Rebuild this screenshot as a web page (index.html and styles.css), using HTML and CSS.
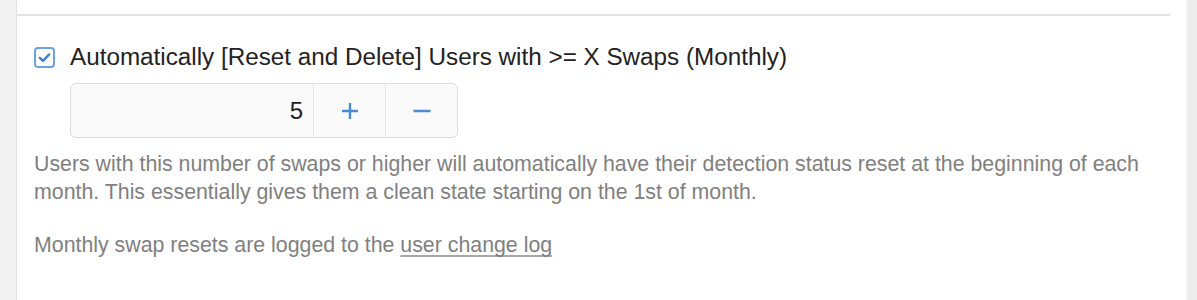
FILE: index.html
```html
<!DOCTYPE html>
<html>
<head>
<meta charset="utf-8">
<link rel="stylesheet" href="styles.css">
</head>
<body>
<div class="page">
  <div class="gutter-left"></div>
  <main class="panel">
    <div class="prev-rule"></div>
    <section class="setting">
      <label class="title-row">
        <span class="checkbox">
          <svg viewBox="0 0 21 21" width="21" height="21">
            <rect x="1" y="1" width="19" height="19" rx="3" fill="#fff" stroke="#6aa3e3" stroke-width="2"/>
            <path d="M5.8 10.8 L9 13.9 L15.2 7.4" fill="none" stroke="#3f7fcf" stroke-width="2.3" stroke-linecap="round" stroke-linejoin="round"/>
          </svg>
        </span>
        <span class="title">Automatically [Reset and Delete] Users with &gt;= X Swaps (Monthly)</span>
      </label>
      <div class="stepper">
        <div class="value">5</div>
        <div class="btn">
          <svg viewBox="0 0 18 18" width="18" height="18"><path d="M9 1 V17 M1 9 H17" stroke="#4a8ad6" stroke-width="2.4" fill="none"/></svg>
        </div>
        <div class="btn">
          <svg viewBox="0 0 18 18" width="18" height="18"><path d="M0.5 9 H17.5" stroke="#4a8ad6" stroke-width="2.6" fill="none"/></svg>
        </div>
      </div>
      <p class="help">Users with this number of swaps or higher will automatically have their detection status reset at the beginning of each month. This essentially gives them a clean state starting on the 1st of month.</p>
      <p class="help">Monthly swap resets are logged to the <a class="link" href="#">user change log</a></p>
    </section>
  </main>
  <div class="gutter-right"></div>
</div>
</body>
</html>
```

FILE: styles.css
```css
html, body {
  margin: 0;
  padding: 0;
  height: 100%;
}
body {
  font-family: "Liberation Sans", Arial, sans-serif;
  background: #f4f4f4;
}
.page {
  display: flex;
  height: 300px;
  overflow: hidden;
}
.gutter-left {
  width: 16px;
  flex: none;
  background: #f3f3f3;
  border-right: 1px solid #e3e3e3;
}
.panel {
  flex: 1;
  background: #fff;
  padding-right: 16px;
}
.gutter-right {
  width: 9px;
  flex: none;
  background: #ececec;
  border-left: 2px solid #f5f5f5;
}
.prev-rule {
  height: 14px;
  border-bottom: 2px solid #e2e2e2;
}
.setting {
  padding: 31px 0 0 17px;
}
.title-row {
  display: flex;
  align-items: center;
  gap: 15px;
  height: 20px;
}
.checkbox {
  display: flex;
  width: 21px;
  height: 21px;
}
.title {
  font-size: 24.25px;
  color: #222;
}
.stepper {
  margin: 16px 0 0 36px;
  display: flex;
  width: 386px;
  height: 53px;
  border: 1px solid #dcdcdc;
  border-radius: 6px;
  background: #fafafa;
  overflow: hidden;
}
.value {
  flex: 1;
  display: flex;
  align-items: center;
  justify-content: flex-end;
  padding-right: 10px;
  font-size: 24px;
  color: #222;
}
.btn {
  width: 71px;
  flex: none;
  display: flex;
  align-items: center;
  justify-content: center;
  border-left: 1px solid #e3e3e3;
}
.help {
  margin: 0;
  font-size: 21.33px;
  line-height: 28px;
  color: #808080;
  padding-right: 20px;
}
.stepper + .help {
  margin-top: 12px;
}
.help + .help {
  margin-top: 25px;
}
.link {
  color: #808080;
  text-decoration: underline;
  text-decoration-color: #a8a8a8;
  text-decoration-skip-ink: none;
  text-underline-offset: 3px;
}
```
